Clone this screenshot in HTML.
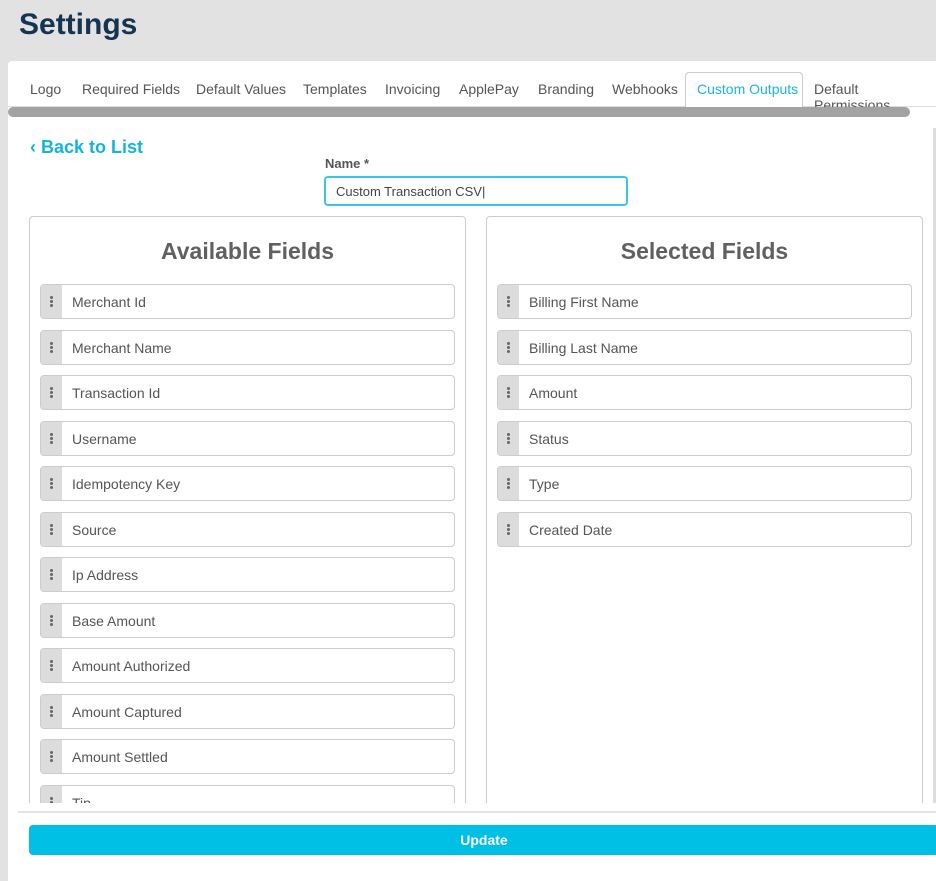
<!DOCTYPE html>
<html><head><style>
*{box-sizing:border-box;margin:0;padding:0}
body{width:936px;height:864px;background:#e2e2e2;font-family:"Liberation Sans",sans-serif;position:relative;overflow:hidden}
h1{position:absolute;left:19px;top:8px;font-size:30px;font-weight:bold;color:#143452}
.panel{position:absolute;left:8px;top:61px;width:940px;height:820px;background:#fff;border-top-left-radius:4px}
.tab{position:absolute;top:81px;font-size:14px;color:#555}
.act{position:absolute;left:685px;top:72px;width:118px;height:36px;border:1px solid #ccc;border-bottom:none;border-radius:4px 4px 0 0;background:#fff}
.tabline{position:absolute;left:8px;top:106px;width:928px;height:1px;background:#ddd}
.sbar{position:absolute;left:8px;top:107px;width:902px;height:10px;background:#a2a2a2;border-radius:5px}
.vs{position:absolute;left:933px;top:128px;width:3px;height:680px;background:#ddd}
.back{position:absolute;left:30px;top:137px;font-size:18px;font-weight:bold;color:#12b5de}
.lbl{position:absolute;left:325px;top:156px;font-size:13px;font-weight:bold;color:#555}
.inp{position:absolute;left:324px;top:176px;width:304px;height:30px;border:2px solid #3cc4e4;border-radius:4px;font-size:13px;color:#444;padding:6px 10px}
.box{position:absolute;top:216px;width:437px;height:600px;border:1px solid #ccc;border-radius:4px}
.box h2{text-align:center;font-size:23px;font-weight:bold;color:#606060;margin-top:21px}
.item{position:absolute;left:10px;width:415px;height:35px;border:1px solid #ccc;border-radius:4px;overflow:hidden}
.item .h{position:absolute;left:0;top:0;width:21px;height:100%;background:#dcdcdc}
.item .h:before{content:"";position:absolute;left:9px;top:11px;width:3px;height:3px;border-radius:50%;background:#666;box-shadow:0 4px #666,0 8px #666}
.item span{position:absolute;left:31px;top:9px;font-size:14px;color:#555}
.clip{position:absolute;left:0;top:803px;width:936px;height:61px;background:#fff}
.sep{position:absolute;left:18px;top:811px;width:918px;height:2px;background:#e4e4e4}
.btn{position:absolute;left:29px;top:825px;width:910px;height:30px;background:#00bfe5;border-radius:4px;color:#fff;font-weight:bold;font-size:14px;text-align:center;line-height:30px}
.lbar{position:absolute;left:0;top:803px;width:8px;height:61px;background:#e2e2e2}
</style></head><body>
<h1>Settings</h1>
<div class="panel"></div>
<div class="tabline"></div>
<div class="act"></div>
<div class="tab" style="left:30px">Logo</div>
<div class="tab" style="left:82px">Required Fields</div>
<div class="tab" style="left:196px">Default Values</div>
<div class="tab" style="left:303px">Templates</div>
<div class="tab" style="left:385px">Invoicing</div>
<div class="tab" style="left:459px">ApplePay</div>
<div class="tab" style="left:538px">Branding</div>
<div class="tab" style="left:612px">Webhooks</div>
<div class="tab" style="left:697px;color:#1ab6dc">Custom Outputs</div>
<div class="tab" style="left:814px">Default Permissions</div>
<div class="sbar"></div>
<div class="vs"></div>
<div class="back">&lsaquo; Back to List</div>
<div class="lbl">Name *</div>
<div class="inp">Custom Transaction CSV|</div>
<div class="box" style="left:29px"><h2>Available Fields</h2>
<div class="item" style="top:67px"><div class="h"></div><span>Merchant Id</span></div>
<div class="item" style="top:113px"><div class="h"></div><span>Merchant Name</span></div>
<div class="item" style="top:158px"><div class="h"></div><span>Transaction Id</span></div>
<div class="item" style="top:204px"><div class="h"></div><span>Username</span></div>
<div class="item" style="top:249px"><div class="h"></div><span>Idempotency Key</span></div>
<div class="item" style="top:295px"><div class="h"></div><span>Source</span></div>
<div class="item" style="top:340px"><div class="h"></div><span>Ip Address</span></div>
<div class="item" style="top:386px"><div class="h"></div><span>Base Amount</span></div>
<div class="item" style="top:431px"><div class="h"></div><span>Amount Authorized</span></div>
<div class="item" style="top:477px"><div class="h"></div><span>Amount Captured</span></div>
<div class="item" style="top:522px"><div class="h"></div><span>Amount Settled</span></div>
<div class="item" style="top:568px"><div class="h"></div><span>Tip</span></div>
</div>
<div class="box" style="left:486px"><h2>Selected Fields</h2>
<div class="item" style="top:67px"><div class="h"></div><span>Billing First Name</span></div>
<div class="item" style="top:113px"><div class="h"></div><span>Billing Last Name</span></div>
<div class="item" style="top:158px"><div class="h"></div><span>Amount</span></div>
<div class="item" style="top:204px"><div class="h"></div><span>Status</span></div>
<div class="item" style="top:249px"><div class="h"></div><span>Type</span></div>
<div class="item" style="top:295px"><div class="h"></div><span>Created Date</span></div>
</div>
<div class="clip"></div>
<div class="lbar"></div>
<div class="sep"></div>
<div class="btn">Update</div>
</body></html>
